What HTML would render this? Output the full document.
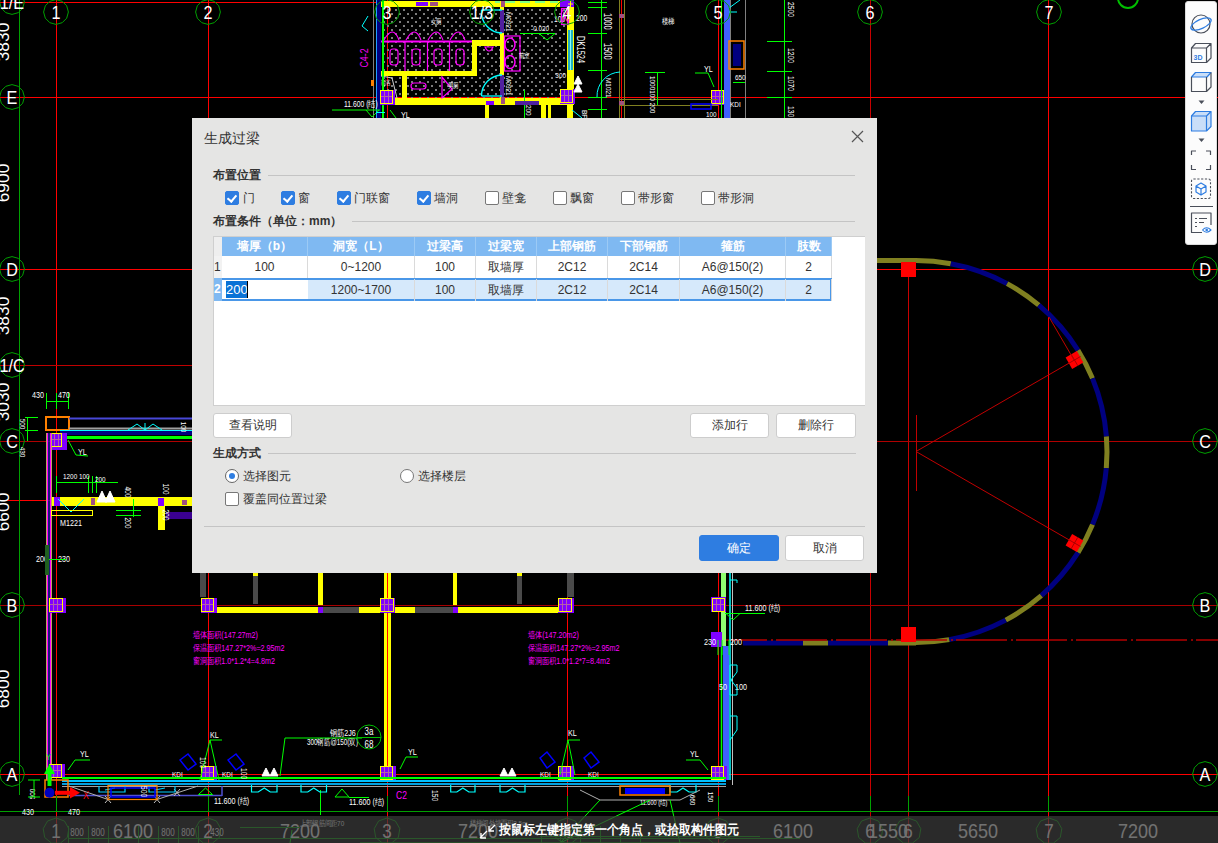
<!DOCTYPE html>
<html><head><meta charset="utf-8">
<style>
*{margin:0;padding:0;box-sizing:border-box}
html,body{width:1218px;height:843px;overflow:hidden;background:#000;font-family:"Liberation Sans",sans-serif}
#cad{position:absolute;left:0;top:0}
#dlg{position:absolute;left:192px;top:118px;width:685px;height:455px;background:#e5e5e4;color:#333;font-size:12px}
#tb{position:absolute;left:1185px;top:1px;width:32px;height:244px;background:#fcfcfc;border-radius:3px;border:1px solid #dcdcdc}
#sb{position:absolute;left:0;top:816px;width:1218px;height:27px;background:rgba(58,58,58,0.72)}

#dlg .t{position:absolute;white-space:nowrap;font-size:12px;line-height:14px;color:#333}
#dlg .b{font-weight:bold}
#dlg .hr{position:absolute;height:1px;background:#c4c4c4}
#dlg .cb{position:absolute;width:14px;height:14px;border:1px solid #777;border-radius:2px;background:#fff}
#dlg .cb.on{background:#2e7de1;border-color:#2e7de1}
#dlg .cb.on::after{content:"";position:absolute;left:3px;top:1px;width:4px;height:7px;border:solid #fff;border-width:0 2px 2px 0;transform:rotate(40deg)}
#dlg .rd{position:absolute;width:14px;height:14px;border:1px solid #777;border-radius:50%;background:#fff}
#dlg .rd.on{border-color:#666}
#dlg .rd.on::after{content:"";position:absolute;left:3px;top:3px;width:6px;height:6px;border-radius:50%;background:#2e7de1}
#tbl .hd{position:absolute;top:0;height:19px;background:#7fb9f2;color:#fff;font-weight:bold;text-align:center;line-height:19px;font-size:12px;border-right:1px solid #9ccaf5}
#tbl .cl{position:absolute;height:22px;text-align:center;line-height:22px;font-size:12px;color:#333;border-right:1px solid #dadada}
#dlg .btn{position:absolute;height:25px;background:#fff;border:1px solid #cdcdcd;border-radius:3px;text-align:center;line-height:23px;font-size:12px;color:#333}
#dlg .btn.pri{background:#2e7de1;border-color:#2e7de1;color:#fff}
</style></head><body>
<svg id="cad" width="1218" height="843" viewBox="0 0 1218 843" font-family="Liberation Sans, sans-serif"><line x1="56.5" y1="0" x2="56.5" y2="843" stroke="#ff0000" stroke-width="1" />
<line x1="208.5" y1="0" x2="208.5" y2="843" stroke="#ff0000" stroke-width="1" />
<line x1="387.5" y1="0" x2="387.5" y2="843" stroke="#ff0000" stroke-width="1" />
<line x1="567.5" y1="0" x2="567.5" y2="843" stroke="#ff0000" stroke-width="1" />
<line x1="718.5" y1="0" x2="718.5" y2="843" stroke="#ff0000" stroke-width="1" />
<line x1="870.5" y1="0" x2="870.5" y2="843" stroke="#c80000" stroke-width="1" />
<line x1="1048.5" y1="0" x2="1048.5" y2="843" stroke="#ff0000" stroke-width="1" />
<line x1="908.5" y1="262" x2="908.5" y2="843" stroke="#c80000" stroke-width="1" />
<line x1="0" y1="2.5" x2="380" y2="2.5" stroke="#ff0000" stroke-width="1" />
<line x1="0" y1="365.5" x2="870" y2="365.5" stroke="#c00000" stroke-width="1" />
<line x1="0" y1="97.5" x2="1218" y2="97.5" stroke="#ff0000" stroke-width="1" />
<line x1="0" y1="269.5" x2="1218" y2="269.5" stroke="#ff0000" stroke-width="1" />
<line x1="0" y1="441.5" x2="1218" y2="441.5" stroke="#b00000" stroke-width="1" />
<line x1="0" y1="605.5" x2="1218" y2="605.5" stroke="#a80000" stroke-width="1" />
<line x1="0" y1="774.5" x2="1218" y2="774.5" stroke="#ff0000" stroke-width="1" />
<line x1="0" y1="500.5" x2="192" y2="500.5" stroke="#ff0000" stroke-width="1" />
<line x1="19.5" y1="0" x2="19.5" y2="795" stroke="#00a000" stroke-width="1" />
<line x1="0" y1="811.5" x2="1218" y2="811.5" stroke="#00a000" stroke-width="1" />
<defs><pattern id="dots" x="3" y="1" width="8" height="8" patternUnits="userSpaceOnUse"><rect x="0" y="0" width="2" height="2" fill="#7c7c7c"/><rect x="4" y="4" width="2" height="2" fill="#7c7c7c"/></pattern></defs>
<rect x="382" y="7" width="185" height="91" fill="url(#dots)" stroke="none" stroke-width="1" />
<rect x="379" y="1" width="195" height="6" fill="#ffff00" stroke="none" stroke-width="1" />
<rect x="379" y="98" width="195" height="7" fill="#ffff00" stroke="none" stroke-width="1" />
<rect x="500" y="1" width="4" height="104" fill="#ffff00" stroke="none" stroke-width="1" />
<rect x="567" y="1" width="7" height="104" fill="#ffff00" stroke="none" stroke-width="1" />
<rect x="568" y="30" width="5" height="40" fill="#20b0c0" stroke="none" stroke-width="1" />
<line x1="570.5" y1="30" x2="570.5" y2="70" stroke="#80ffff" stroke-width="1" />
<rect x="381" y="71" width="96" height="5" fill="#ffff00" stroke="none" stroke-width="1" />
<rect x="402" y="76" width="5" height="23" fill="#ffff00" stroke="none" stroke-width="1" />
<rect x="472" y="40" width="5" height="36" fill="#ffff00" stroke="none" stroke-width="1" />
<rect x="472" y="40" width="29" height="6" fill="#ffff00" stroke="none" stroke-width="1" />
<line x1="381" y1="41.5" x2="472" y2="41.5" stroke="#ff00ff" stroke-width="2" />
<line x1="405" y1="41" x2="405" y2="71" stroke="#ff00ff" stroke-width="1.2" />
<line x1="427.5" y1="41" x2="427.5" y2="71" stroke="#ff00ff" stroke-width="1.2" />
<line x1="449.5" y1="41" x2="449.5" y2="71" stroke="#ff00ff" stroke-width="1.2" />
<rect x="390" y="49" width="8" height="16" fill="none" stroke="#ff00ff" stroke-width="1.2" rx="3"/>
<path d="M384,40 Q393,24 399,40" stroke="#ff00ff" stroke-width="1.2" fill="none" />
<rect x="412" y="49" width="8" height="16" fill="none" stroke="#ff00ff" stroke-width="1.2" rx="3"/>
<path d="M406,40 Q415,24 421,40" stroke="#ff00ff" stroke-width="1.2" fill="none" />
<rect x="434" y="49" width="8" height="16" fill="none" stroke="#ff00ff" stroke-width="1.2" rx="3"/>
<path d="M428,40 Q437,24 443,40" stroke="#ff00ff" stroke-width="1.2" fill="none" />
<rect x="456" y="49" width="8" height="16" fill="none" stroke="#ff00ff" stroke-width="1.2" rx="3"/>
<path d="M450,40 Q459,24 465,40" stroke="#ff00ff" stroke-width="1.2" fill="none" />
<rect x="411" y="83" width="15" height="6" fill="none" stroke="#ff00ff" stroke-width="1.2" rx="3"/>
<path d="M442,77 L442,98 L452,89 Z" stroke="#ff00ff" stroke-width="1.2" fill="none" />
<path d="M485,47 Q489,55 493,47 Z" stroke="#ff00ff" stroke-width="1.2" fill="none" />
<rect x="504.5" y="36" width="15.5" height="35" fill="none" stroke="#ff00ff" stroke-width="1.2" />
<ellipse cx="510" cy="44.5" rx="5" ry="6.5" fill="none" stroke="#ff00ff" stroke-width="1.5"/>
<ellipse cx="510" cy="62" rx="5" ry="6.5" fill="none" stroke="#ff00ff" stroke-width="1.5"/>
<text transform="translate(431,24) scale(0.8,1)" fill="#fff" font-size="7" text-anchor="start" >女厕</text>
<text transform="translate(448,88) scale(0.8,1)" fill="#fff" font-size="7" text-anchor="start" >男厕</text>
<text transform="translate(519,58) scale(0.8,1)" fill="#fff" font-size="7" text-anchor="start" >前室</text>
<text transform="translate(380,85) scale(0.8,1)" fill="#fff" font-size="7" text-anchor="start" >清洁</text>
<path d="M381,76 L392,78 L397,98" stroke="#d0d0d0" stroke-width="1" fill="none" />
<rect x="500" y="10" width="4" height="23" fill="#5020a0" stroke="none" stroke-width="1" />
<rect x="500" y="75" width="4" height="22" fill="#5020a0" stroke="none" stroke-width="1" />
<path d="M502,33 A21,21 0 0 1 481.5,10" stroke="#00ffff" stroke-width="1.3" fill="none" />
<line x1="481.5" y1="10" x2="502" y2="10" stroke="#00ffff" stroke-width="1.3" />
<path d="M481.5,96 A21,21 0 0 1 502,75" stroke="#00ffff" stroke-width="1.3" fill="none" />
<line x1="481.5" y1="96" x2="502" y2="96" stroke="#00ffff" stroke-width="1.3" />
<text transform="translate(506,12) rotate(90) scale(0.8,1)" fill="#fff" font-size="8" text-anchor="start" >M0921</text>
<text transform="translate(506,76) rotate(90) scale(0.8,1)" fill="#fff" font-size="8" text-anchor="start" >M0921</text>
<line x1="520" y1="33.5" x2="555" y2="33.5" stroke="#00ff00" stroke-width="1" />
<path d="M539,33.5 L547,40 L555,33.5" stroke="#00ff00" stroke-width="1" fill="none" />
<text transform="translate(531,31) scale(0.8,1)" fill="#fff" font-size="8" text-anchor="start" >-0.020</text>
<line x1="373.5" y1="0" x2="373.5" y2="118" stroke="#808080" stroke-width="1" />
<rect x="377" y="0" width="4" height="118" fill="#000080" stroke="none" stroke-width="1" />
<line x1="376.5" y1="0" x2="376.5" y2="118" stroke="#20a0ff" stroke-width="1" />
<rect x="382" y="0" width="2" height="118" fill="#00ff00" stroke="none" stroke-width="1" />
<text transform="translate(368,58) rotate(-90) scale(0.8,1)" fill="#ff00ff" font-size="11" text-anchor="middle" >C4-2</text>
<path d="M368,16 L362,26 L368,31" stroke="#00ffff" stroke-width="1" fill="none" />
<rect x="371" y="80" width="3" height="6" fill="#ff8000" stroke="none" stroke-width="1" />
<rect x="380" y="90" width="15" height="15" fill="#8000ff" stroke="none" stroke-width="1" />
<rect x="380.5" y="90.5" width="12" height="13" fill="none" stroke="#ffff00" stroke-width="1" />
<path d="M384.5,91 L384.5,103 M388.5,91 L388.5,103 M381,96.5 L392,96.5" stroke="#d8a070" stroke-width="1" opacity="0.6"/>
<rect x="560" y="89" width="15" height="15" fill="#8000ff" stroke="none" stroke-width="1" />
<rect x="560.5" y="89.5" width="12" height="13" fill="none" stroke="#ffff00" stroke-width="1" />
<path d="M564.5,90 L564.5,102 M568.5,90 L568.5,102 M561,95.5 L572,95.5" stroke="#d8a070" stroke-width="1" opacity="0.6"/>
<rect x="711" y="90" width="15" height="15" fill="#8000ff" stroke="none" stroke-width="1" />
<rect x="711.5" y="90.5" width="12" height="13" fill="none" stroke="#ffff00" stroke-width="1" />
<path d="M715.5,91 L715.5,103 M719.5,91 L719.5,103 M712,96.5 L723,96.5" stroke="#d8a070" stroke-width="1" opacity="0.6"/>
<rect x="560" y="1" width="8" height="6" fill="#8000ff" stroke="none" stroke-width="1" />
<rect x="416" y="2" width="12" height="4" fill="#8000ff" stroke="none" stroke-width="1" />
<rect x="430" y="2" width="8" height="4" fill="#a05080" stroke="none" stroke-width="1" />
<rect x="501" y="1" width="4" height="6" fill="#a05080" stroke="none" stroke-width="1" />
<rect x="501" y="97" width="4" height="7" fill="#a05080" stroke="none" stroke-width="1" />
<rect x="485" y="105" width="4" height="13" fill="#ffff00" stroke="none" stroke-width="1" />
<rect x="541" y="105" width="5" height="13" fill="#ffff00" stroke="none" stroke-width="1" />
<rect x="548" y="105" width="3" height="13" fill="#ffff00" stroke="none" stroke-width="1" />
<rect x="567" y="105" width="6" height="13" fill="#ffff00" stroke="none" stroke-width="1" />
<text transform="translate(582,110) rotate(90) scale(0.8,1)" fill="#fff" font-size="8" text-anchor="start" >BF</text>
<path d="M572,110 L582,118" stroke="#00ffff" stroke-width="1" fill="none" />
<path d="M495,2 L500,2 M505,2 L515,2 M520,2 L530,2 M535,2 L545,2 M550,2 L558,2" stroke="#00ffff" stroke-width="1" fill="none" />
<rect x="486" y="101" width="8" height="4" fill="#8000ff" stroke="none" stroke-width="1" />
<line x1="524.5" y1="90" x2="524.5" y2="118" stroke="#00ff00" stroke-width="1" />
<rect x="515" y="101" width="24" height="4" fill="#5020a0" stroke="none" stroke-width="1" />
<text transform="translate(526,105) rotate(90) scale(0.8,1)" fill="#fff" font-size="8" text-anchor="start" >200</text>
<text transform="translate(401,118) scale(0.8,1)" fill="#fff" font-size="9" text-anchor="start" >YL</text>
<path d="M390,110 L396,118" stroke="#00ff00" stroke-width="1" fill="none" />
<text transform="translate(344,107) scale(0.8,1)" fill="#fff" font-size="8.5" text-anchor="start" >11.600 (结)</text>
<path d="M332,110 L380,110 M366,110 L372,117 L379,110" stroke="#00ff00" stroke-width="1" fill="none" />
<line x1="376" y1="112.5" x2="385" y2="112.5" stroke="#00ffff" stroke-width="1" />
<line x1="601.5" y1="0" x2="601.5" y2="118" stroke="#00ff00" stroke-width="1" />
<line x1="588" y1="2.5" x2="607" y2="2.5" stroke="#00ff00" stroke-width="1" />
<line x1="588" y1="7.5" x2="607" y2="7.5" stroke="#00ff00" stroke-width="1" />
<line x1="588" y1="33.5" x2="607" y2="33.5" stroke="#00ff00" stroke-width="1" />
<line x1="588" y1="70.5" x2="607" y2="70.5" stroke="#00ff00" stroke-width="1" />
<line x1="588" y1="97.5" x2="607" y2="97.5" stroke="#00ff00" stroke-width="1" />
<line x1="588" y1="109.5" x2="607" y2="109.5" stroke="#00ff00" stroke-width="1" />
<text transform="translate(604,13) rotate(90) scale(0.75,1)" fill="#fff" font-size="10" text-anchor="start" >1000</text>
<text transform="translate(604,43) rotate(90) scale(0.75,1)" fill="#fff" font-size="10" text-anchor="start" >1500</text>
<line x1="619.5" y1="0" x2="619.5" y2="118" stroke="#808020" stroke-width="1" />
<line x1="624.5" y1="0" x2="624.5" y2="118" stroke="#808020" stroke-width="1" />
<line x1="621.5" y1="0" x2="621.5" y2="118" stroke="#ff0000" stroke-width="1" />
<rect x="619" y="14" width="5" height="4" fill="#a05080" stroke="none" stroke-width="1" />
<rect x="619" y="101" width="5" height="4" fill="#a05080" stroke="none" stroke-width="1" />
<line x1="619" y1="99.5" x2="718" y2="99.5" stroke="#808020" stroke-width="1" />
<line x1="619" y1="105.5" x2="718" y2="105.5" stroke="#808020" stroke-width="1" />
<line x1="657.5" y1="72" x2="657.5" y2="105" stroke="#00ff00" stroke-width="1" />
<line x1="645" y1="72.5" x2="665" y2="72.5" stroke="#00ff00" stroke-width="1" />
<text transform="translate(650,76) rotate(90) scale(0.8,1)" fill="#fff" font-size="8" text-anchor="start" >1000100 200</text>
<text transform="translate(576,21) scale(0.75,1)" fill="#fff" font-size="9" text-anchor="start" >200</text>
<text transform="translate(554,22) scale(0.75,1)" fill="#fff" font-size="9" text-anchor="start" >100</text>
<text transform="translate(577,36) rotate(90) scale(0.72,1)" fill="#fff" font-size="10.5" text-anchor="start" >DK1524</text>
<path d="M574,84 L578,76 L582,84 Z M574,92 L578,84 L582,92 Z" stroke="#fff" stroke-width="1" fill="#fff" />
<rect x="560" y="0" width="14" height="7" fill="#8000ff" stroke="none" stroke-width="1" />
<rect x="561.5" y="8.5" width="7" height="16" fill="none" stroke="#ff00ff" stroke-width="1.2" />
<path d="M561.5,8.5 L568.5,24.5 M568.5,8.5 L561.5,24.5" stroke="#ff00ff" stroke-width="1" fill="none" />
<path d="M568,4 L573,4 M570.5,1 L570.5,7" stroke="#ffff00" stroke-width="1" fill="none" />
<text transform="translate(566,78) scale(0.8,1)" fill="#fff" font-size="8" text-anchor="end" >300</text>
<text transform="translate(606,78) rotate(90) scale(0.8,1)" fill="#fff" font-size="8" text-anchor="start" >M1021</text>
<path d="M597,97 A24,24 0 0 1 620,72" stroke="#00ffff" stroke-width="1" fill="none" />
<text transform="translate(704,72) scale(0.8,1)" fill="#fff" font-size="9" text-anchor="start" >YL</text>
<path d="M695,73 L708,73 L714,87" stroke="#00ff00" stroke-width="1" fill="none" />
<rect x="691" y="104" width="20" height="5" fill="none" stroke="#0000ff" stroke-width="1.5" />
<text transform="translate(706,117) scale(0.8,1)" fill="#fff" font-size="8" text-anchor="start" >100</text>
<line x1="721.5" y1="0" x2="721.5" y2="118" stroke="#00ff00" stroke-width="1" />
<rect x="724" y="0" width="6" height="118" fill="#4060ff" stroke="none" stroke-width="1" />
<line x1="730.5" y1="0" x2="730.5" y2="118" stroke="#808080" stroke-width="1" />
<line x1="745.5" y1="0" x2="745.5" y2="118" stroke="#808080" stroke-width="1" />
<rect x="729" y="41" width="15" height="28" fill="none" stroke="#ff8000" stroke-width="1.5" />
<rect x="733" y="44" width="8" height="22" fill="#000080" stroke="none" stroke-width="1" />
<text transform="translate(735,80) scale(0.8,1)" fill="#fff" font-size="8" text-anchor="start" >650</text>
<text transform="translate(730,107) scale(0.8,1)" fill="#fff" font-size="8" text-anchor="start" >KDI</text>
<line x1="733" y1="82.5" x2="745" y2="82.5" stroke="#00ff00" stroke-width="1" />
<path d="M729,8 L740,0 M729,12 L737,12" stroke="#00ffff" stroke-width="1" fill="none" />
<line x1="784.5" y1="0" x2="784.5" y2="118" stroke="#00ff00" stroke-width="1" />
<line x1="767" y1="41.5" x2="792" y2="41.5" stroke="#00ff00" stroke-width="1" />
<line x1="767" y1="71.5" x2="792" y2="71.5" stroke="#00ff00" stroke-width="1" />
<line x1="767" y1="97.5" x2="792" y2="97.5" stroke="#00ff00" stroke-width="1" />
<text transform="translate(788,2) rotate(90) scale(0.75,1)" fill="#fff" font-size="9" text-anchor="start" >2500</text>
<text transform="translate(788,48) rotate(90) scale(0.75,1)" fill="#fff" font-size="9" text-anchor="start" >1200</text>
<text transform="translate(788,76) rotate(90) scale(0.75,1)" fill="#fff" font-size="9" text-anchor="start" >1070</text>
<text transform="translate(788,106) rotate(90) scale(0.75,1)" fill="#fff" font-size="9" text-anchor="start" >130</text>
<line x1="767" y1="97.5" x2="792" y2="97.5" stroke="#00ff00" stroke-width="1" />
<text transform="translate(662,24) scale(0.8,1)" fill="#fff" font-size="8" text-anchor="start" >楼梯</text>
<polygon points="56.0,-0.4 62.2,1.3 66.7,5.8 68.4,12.0 66.7,18.2 62.2,22.7 56.0,24.4 49.8,22.7 45.3,18.2 43.6,12.0 45.3,5.8 49.8,1.3" fill="none" stroke="#00a000" stroke-width="1"/>
<text transform="translate(56,18.5) scale(0.9,1)" fill="#fff" font-size="18" text-anchor="middle" >1</text>
<polygon points="208.0,-0.4 214.2,1.3 218.7,5.8 220.4,12.0 218.7,18.2 214.2,22.7 208.0,24.4 201.8,22.7 197.3,18.2 195.6,12.0 197.3,5.8 201.8,1.3" fill="none" stroke="#00a000" stroke-width="1"/>
<text transform="translate(208,18.5) scale(0.9,1)" fill="#fff" font-size="18" text-anchor="middle" >2</text>
<polygon points="387.0,-0.4 393.2,1.3 397.7,5.8 399.4,12.0 397.7,18.2 393.2,22.7 387.0,24.4 380.8,22.7 376.3,18.2 374.6,12.0 376.3,5.8 380.8,1.3" fill="none" stroke="#00a000" stroke-width="1"/>
<text transform="translate(387,18.5) scale(0.9,1)" fill="#fff" font-size="18" text-anchor="middle" >3</text>
<polygon points="482.0,-0.4 488.2,1.3 492.7,5.8 494.4,12.0 492.7,18.2 488.2,22.7 482.0,24.4 475.8,22.7 471.3,18.2 469.6,12.0 471.3,5.8 475.8,1.3" fill="none" stroke="#00a000" stroke-width="1"/>
<text transform="translate(482,18.5) scale(0.9,1)" fill="#fff" font-size="18" text-anchor="middle" >1/3</text>
<polygon points="567.0,-0.4 573.2,1.3 577.7,5.8 579.4,12.0 577.7,18.2 573.2,22.7 567.0,24.4 560.8,22.7 556.3,18.2 554.6,12.0 556.3,5.8 560.8,1.3" fill="none" stroke="#00a000" stroke-width="1"/>
<text transform="translate(567,18.5) scale(0.9,1)" fill="#fff" font-size="18" text-anchor="middle" >4</text>
<polygon points="718.0,-0.4 724.2,1.3 728.7,5.8 730.4,12.0 728.7,18.2 724.2,22.7 718.0,24.4 711.8,22.7 707.3,18.2 705.6,12.0 707.3,5.8 711.8,1.3" fill="none" stroke="#00a000" stroke-width="1"/>
<text transform="translate(718,18.5) scale(0.9,1)" fill="#fff" font-size="18" text-anchor="middle" >5</text>
<polygon points="870.0,-0.4 876.2,1.3 880.7,5.8 882.4,12.0 880.7,18.2 876.2,22.7 870.0,24.4 863.8,22.7 859.3,18.2 857.6,12.0 859.3,5.8 863.8,1.3" fill="none" stroke="#00a000" stroke-width="1"/>
<text transform="translate(870,18.5) scale(0.9,1)" fill="#fff" font-size="18" text-anchor="middle" >6</text>
<polygon points="1049.0,-0.4 1055.2,1.3 1059.7,5.8 1061.4,12.0 1059.7,18.2 1055.2,22.7 1049.0,24.4 1042.8,22.7 1038.3,18.2 1036.6,12.0 1038.3,5.8 1042.8,1.3" fill="none" stroke="#00a000" stroke-width="1"/>
<text transform="translate(1049,18.5) scale(0.9,1)" fill="#fff" font-size="18" text-anchor="middle" >7</text>
<circle cx="1128" cy="-2" r="10" fill="none" stroke="#00c000" stroke-width="2"/>
<polygon points="12.0,-10.4 18.2,-8.7 22.7,-4.2 24.4,2.0 22.7,8.2 18.2,12.7 12.0,14.4 5.8,12.7 1.3,8.2 -0.4,2.0 1.3,-4.2 5.8,-8.7" fill="none" stroke="#00a000" stroke-width="1"/>
<text transform="translate(12,8.5) scale(0.9,1)" fill="#fff" font-size="18" text-anchor="middle" >1/E</text>
<polygon points="12.0,84.6 18.2,86.3 22.7,90.8 24.4,97.0 22.7,103.2 18.2,107.7 12.0,109.4 5.8,107.7 1.3,103.2 -0.4,97.0 1.3,90.8 5.8,86.3" fill="none" stroke="#00a000" stroke-width="1"/>
<text transform="translate(12,103.5) scale(0.9,1)" fill="#fff" font-size="18" text-anchor="middle" >E</text>
<polygon points="12.0,256.6 18.2,258.3 22.7,262.8 24.4,269.0 22.7,275.2 18.2,279.7 12.0,281.4 5.8,279.7 1.3,275.2 -0.4,269.0 1.3,262.8 5.8,258.3" fill="none" stroke="#00a000" stroke-width="1"/>
<text transform="translate(12,275.5) scale(0.9,1)" fill="#fff" font-size="18" text-anchor="middle" >D</text>
<polygon points="12.0,352.6 18.2,354.3 22.7,358.8 24.4,365.0 22.7,371.2 18.2,375.7 12.0,377.4 5.8,375.7 1.3,371.2 -0.4,365.0 1.3,358.8 5.8,354.3" fill="none" stroke="#00a000" stroke-width="1"/>
<text transform="translate(12,371.5) scale(0.9,1)" fill="#fff" font-size="18" text-anchor="middle" >1/C</text>
<polygon points="12.0,428.6 18.2,430.3 22.7,434.8 24.4,441.0 22.7,447.2 18.2,451.7 12.0,453.4 5.8,451.7 1.3,447.2 -0.4,441.0 1.3,434.8 5.8,430.3" fill="none" stroke="#00a000" stroke-width="1"/>
<text transform="translate(12,447.5) scale(0.9,1)" fill="#fff" font-size="18" text-anchor="middle" >C</text>
<polygon points="12.0,592.6 18.2,594.3 22.7,598.8 24.4,605.0 22.7,611.2 18.2,615.7 12.0,617.4 5.8,615.7 1.3,611.2 -0.4,605.0 1.3,598.8 5.8,594.3" fill="none" stroke="#00a000" stroke-width="1"/>
<text transform="translate(12,611.5) scale(0.9,1)" fill="#fff" font-size="18" text-anchor="middle" >B</text>
<polygon points="12.0,761.6 18.2,763.3 22.7,767.8 24.4,774.0 22.7,780.2 18.2,784.7 12.0,786.4 5.8,784.7 1.3,780.2 -0.4,774.0 1.3,767.8 5.8,763.3" fill="none" stroke="#00a000" stroke-width="1"/>
<text transform="translate(12,780.5) scale(0.9,1)" fill="#fff" font-size="18" text-anchor="middle" >A</text>
<polygon points="1205.0,256.6 1211.2,258.3 1215.7,262.8 1217.4,269.0 1215.7,275.2 1211.2,279.7 1205.0,281.4 1198.8,279.7 1194.3,275.2 1192.6,269.0 1194.3,262.8 1198.8,258.3" fill="none" stroke="#00a000" stroke-width="1"/>
<text transform="translate(1205,275.5) scale(0.9,1)" fill="#fff" font-size="18" text-anchor="middle" >D</text>
<polygon points="1205.0,428.6 1211.2,430.3 1215.7,434.8 1217.4,441.0 1215.7,447.2 1211.2,451.7 1205.0,453.4 1198.8,451.7 1194.3,447.2 1192.6,441.0 1194.3,434.8 1198.8,430.3" fill="none" stroke="#00a000" stroke-width="1"/>
<text transform="translate(1205,447.5) scale(0.9,1)" fill="#fff" font-size="18" text-anchor="middle" >C</text>
<polygon points="1205.0,592.6 1211.2,594.3 1215.7,598.8 1217.4,605.0 1215.7,611.2 1211.2,615.7 1205.0,617.4 1198.8,615.7 1194.3,611.2 1192.6,605.0 1194.3,598.8 1198.8,594.3" fill="none" stroke="#00a000" stroke-width="1"/>
<text transform="translate(1205,611.5) scale(0.9,1)" fill="#fff" font-size="18" text-anchor="middle" >B</text>
<polygon points="1205.0,761.6 1211.2,763.3 1215.7,767.8 1217.4,774.0 1215.7,780.2 1211.2,784.7 1205.0,786.4 1198.8,784.7 1194.3,780.2 1192.6,774.0 1194.3,767.8 1198.8,763.3" fill="none" stroke="#00a000" stroke-width="1"/>
<text transform="translate(1205,780.5) scale(0.9,1)" fill="#fff" font-size="18" text-anchor="middle" >A</text>
<text transform="translate(8.5,42) rotate(-90) scale(1.02,1)" fill="#fff" font-size="17" text-anchor="middle" >3830</text>
<text transform="translate(8.5,183) rotate(-90) scale(1.02,1)" fill="#fff" font-size="17" text-anchor="middle" >6900</text>
<text transform="translate(8.5,316) rotate(-90) scale(1.02,1)" fill="#fff" font-size="17" text-anchor="middle" >3830</text>
<text transform="translate(8.5,402) rotate(-90) scale(1.02,1)" fill="#fff" font-size="17" text-anchor="middle" >3030</text>
<text transform="translate(8.5,512) rotate(-90) scale(1.02,1)" fill="#fff" font-size="17" text-anchor="middle" >6600</text>
<text transform="translate(8.5,689) rotate(-90) scale(1.02,1)" fill="#fff" font-size="17" text-anchor="middle" >6800</text>
<path d="M916.0,260.5 A191,191 0 0 1 950.8,263.7" stroke="#808020" stroke-width="5" fill="none" />
<path d="M950.8,263.7 A191,191 0 0 1 1007.1,283.6" stroke="#000080" stroke-width="5" fill="none" />
<path d="M1007.1,283.6 A191,191 0 0 1 1038.8,305.2" stroke="#808020" stroke-width="5" fill="none" />
<path d="M1038.8,305.2 A191,191 0 0 1 1078.0,350.3" stroke="#000080" stroke-width="5" fill="none" />
<path d="M1078.0,350.3 A191,191 0 0 1 1092.5,378.4" stroke="#808020" stroke-width="5" fill="none" />
<path d="M1092.5,378.4 A191,191 0 0 1 1106.4,436.5" stroke="#000080" stroke-width="5" fill="none" />
<path d="M1106.4,436.5 A191,191 0 0 1 1106.3,468.1" stroke="#808020" stroke-width="5" fill="none" />
<path d="M1106.3,468.1 A191,191 0 0 1 1092.5,524.6" stroke="#000080" stroke-width="5" fill="none" />
<path d="M1092.5,524.6 A191,191 0 0 1 1078.0,552.7" stroke="#808020" stroke-width="5" fill="none" />
<path d="M1078.0,552.7 A191,191 0 0 1 1041.3,595.6" stroke="#000080" stroke-width="5" fill="none" />
<path d="M1041.3,595.6 A191,191 0 0 1 1005.7,620.1" stroke="#808020" stroke-width="5" fill="none" />
<path d="M1005.7,620.1 A191,191 0 0 1 949.2,639.6" stroke="#000080" stroke-width="5" fill="none" />
<path d="M949.2,639.6 A191,191 0 0 1 916.0,642.5" stroke="#808020" stroke-width="5" fill="none" />
<line x1="877" y1="260.5" x2="916" y2="260.5" stroke="#808020" stroke-width="5" />
<line x1="743" y1="643" x2="803" y2="643" stroke="#000080" stroke-width="5" />
<line x1="803" y1="643" x2="828" y2="643" stroke="#808020" stroke-width="5" />
<line x1="828" y1="643" x2="888" y2="643" stroke="#000080" stroke-width="5" />
<line x1="888" y1="643" x2="916" y2="643" stroke="#808020" stroke-width="5" />
<line x1="716" y1="640" x2="1218" y2="640" stroke="#b40000" stroke-width="1.5" stroke-dasharray="51,4,2,3"/>
<rect x="901" y="262" width="15" height="15" fill="#ff0000" stroke="none" stroke-width="1" />
<rect x="901" y="627" width="15" height="15" fill="#ff0000" stroke="none" stroke-width="1" />
<line x1="916" y1="451.5" x2="1074.4826488925523" y2="360.0" stroke="#c00000" stroke-width="1" />
<g transform="rotate(-30 1074.5 360.0)"><rect x="1068.0" y="353.5" width="13" height="13" fill="#ff0000"/><path d="M1067.5,360.0 L1081.5,360.0 M1074.5,353.0 L1074.5,367.0" stroke="#a00000" stroke-width="0.8"/></g>
<line x1="916" y1="451.5" x2="1074.4826488925523" y2="543.0" stroke="#c00000" stroke-width="1" />
<g transform="rotate(30 1074.5 543.0)"><rect x="1068.0" y="536.5" width="13" height="13" fill="#ff0000"/><path d="M1067.5,543.0 L1081.5,543.0 M1074.5,536.0 L1074.5,550.0" stroke="#a00000" stroke-width="0.8"/></g>
<line x1="916.5" y1="415" x2="916.5" y2="491" stroke="#c00000" stroke-width="1" />
<line x1="1049" y1="317" x2="1074" y2="360" stroke="#c00000" stroke-width="1" />
<rect x="46" y="417" width="23" height="13" fill="none" stroke="#ff8000" stroke-width="2" />
<line x1="69" y1="418.5" x2="192" y2="418.5" stroke="#4848d8" stroke-width="2" />
<line x1="69" y1="428.5" x2="192" y2="428.5" stroke="#a0a0a0" stroke-width="2" />
<line x1="60" y1="430.5" x2="192" y2="430.5" stroke="#00ffff" stroke-width="1" />
<rect x="60" y="431" width="132" height="4" fill="#000080" stroke="none" stroke-width="1" />
<rect x="60" y="436" width="132" height="3" fill="#00ff00" stroke="none" stroke-width="1" />
<rect x="50" y="433" width="17" height="17" fill="#8000ff" stroke="none" stroke-width="1" />
<rect x="50.5" y="433.5" width="11" height="13" fill="none" stroke="#ffff00" stroke-width="1" />
<path d="M54.5,434 L54.5,446 M58.5,434 L58.5,446 M51,439.5 L61,439.5" stroke="#d8a070" stroke-width="1" opacity="0.6"/>
<line x1="46.5" y1="433" x2="46.5" y2="780" stroke="#c0a060" stroke-width="1" />
<line x1="47.5" y1="433" x2="47.5" y2="780" stroke="#ff00ff" stroke-width="1" />
<line x1="49" y1="433" x2="49" y2="780" stroke="#2020a0" stroke-width="1.5" />
<line x1="50.5" y1="433" x2="50.5" y2="780" stroke="#ff00ff" stroke-width="1" />
<line x1="51.5" y1="433" x2="51.5" y2="780" stroke="#c0a060" stroke-width="1" />
<line x1="46.5" y1="393" x2="46.5" y2="409" stroke="#00ff00" stroke-width="1" />
<line x1="56.5" y1="393" x2="56.5" y2="409" stroke="#00ff00" stroke-width="1" />
<line x1="68.5" y1="393" x2="68.5" y2="409" stroke="#00ff00" stroke-width="1" />
<line x1="46" y1="401.5" x2="68" y2="401.5" stroke="#00ff00" stroke-width="1" />
<text transform="translate(32,398) scale(0.8,1)" fill="#fff" font-size="9" text-anchor="start" >430</text>
<text transform="translate(58,398) scale(0.8,1)" fill="#fff" font-size="9" text-anchor="start" >470</text>
<line x1="25" y1="417.5" x2="38" y2="417.5" stroke="#00ff00" stroke-width="1" />
<line x1="25" y1="430.5" x2="38" y2="430.5" stroke="#00ff00" stroke-width="1" />
<line x1="27.5" y1="417" x2="27.5" y2="441" stroke="#00ff00" stroke-width="1" />
<text transform="translate(20,424) rotate(90) scale(0.8,1)" fill="#fff" font-size="8" text-anchor="middle" >500</text>
<text transform="translate(20,452) rotate(90) scale(0.8,1)" fill="#fff" font-size="8" text-anchor="middle" >430</text>
<text transform="translate(78,455) scale(0.8,1)" fill="#fff" font-size="9" text-anchor="start" >YL</text>
<path d="M68,440 L76,455 L88,456" stroke="#00ff00" stroke-width="1" fill="none" />
<path d="M128,430 L137,424 L145,430 M145,430 L153,424 L162,430 M145,423 L145,430" stroke="#00ffff" stroke-width="1" fill="none" />
<text transform="translate(181,427) rotate(90) scale(0.8,1)" fill="#fff" font-size="8" text-anchor="middle" >100</text>
<rect x="52" y="497" width="140" height="9" fill="#ffff00" stroke="none" stroke-width="1" />
<rect x="54" y="497" width="6" height="9" fill="#8000ff" stroke="none" stroke-width="1" />
<path d="M58,499 L71,512 L84,499" stroke="#00ffff" stroke-width="1" fill="none" />
<rect x="51.5" y="510.5" width="41" height="5" fill="none" stroke="#ffff00" stroke-width="1" />
<text transform="translate(60,526) scale(0.8,1)" fill="#fff" font-size="9" text-anchor="start" >M1221</text>
<line x1="56" y1="482.5" x2="118" y2="482.5" stroke="#00ff00" stroke-width="1" />
<line x1="56.5" y1="476" x2="56.5" y2="493" stroke="#00ff00" stroke-width="1" />
<line x1="88.5" y1="476" x2="88.5" y2="493" stroke="#00ff00" stroke-width="1" />
<line x1="92.5" y1="476" x2="92.5" y2="493" stroke="#00ff00" stroke-width="1" />
<line x1="96.5" y1="476" x2="96.5" y2="493" stroke="#00ff00" stroke-width="1" />
<text transform="translate(63,479) scale(0.8,1)" fill="#fff" font-size="8" text-anchor="start" >1200 100</text>
<text transform="translate(95,482) scale(0.8,1)" fill="#fff" font-size="8" text-anchor="start" >200</text>
<path d="M97,502 L102,491 L107,502 Z M105,502 L110,491 L115,502 Z" stroke="#fff" stroke-width="1" fill="#fff" />
<rect x="91" y="498" width="4" height="7" fill="#a05080" stroke="none" stroke-width="1" />
<rect x="158" y="498" width="6" height="8" fill="#8000ff" stroke="none" stroke-width="1" />
<rect x="158" y="506" width="7" height="24" fill="#ffff00" stroke="none" stroke-width="1" />
<rect x="166" y="512" width="26" height="7" fill="#3a0090" stroke="none" stroke-width="1" />
<rect x="182" y="500" width="5" height="5" fill="#a05080" stroke="none" stroke-width="1" />
<text transform="translate(163,489) rotate(90) scale(0.75,1)" fill="#fff" font-size="9" text-anchor="middle" >100</text>
<text transform="translate(163,515) rotate(90) scale(0.75,1)" fill="#fff" font-size="9" text-anchor="middle" >200</text>
<text transform="translate(125,492) rotate(90) scale(0.75,1)" fill="#fff" font-size="9" text-anchor="middle" >400</text>
<text transform="translate(125,523) rotate(90) scale(0.75,1)" fill="#fff" font-size="9" text-anchor="middle" >200</text>
<line x1="116" y1="510.5" x2="141" y2="510.5" stroke="#00ff00" stroke-width="1" />
<line x1="116" y1="515.5" x2="141" y2="515.5" stroke="#00ff00" stroke-width="1" />
<line x1="133.5" y1="499" x2="133.5" y2="517" stroke="#00ff00" stroke-width="1" />
<text transform="translate(36,562) scale(0.8,1)" fill="#fff" font-size="9" text-anchor="start" >200</text>
<text transform="translate(58,562) scale(0.8,1)" fill="#fff" font-size="9" text-anchor="start" >230</text>
<line x1="46" y1="559.5" x2="56" y2="559.5" stroke="#00ff00" stroke-width="1" />
<line x1="56" y1="559.5" x2="66" y2="559.5" stroke="#00ff00" stroke-width="1" />
<rect x="45" y="545" width="4" height="30" fill="#206020" stroke="none" stroke-width="1" />
<rect x="49" y="598" width="17" height="15" fill="#8000ff" stroke="none" stroke-width="1" />
<rect x="49.5" y="598.5" width="13" height="13" fill="none" stroke="#ffff00" stroke-width="1" />
<path d="M53.5,599 L53.5,611 M57.5,599 L57.5,611 M50,604.5 L62,604.5" stroke="#d8a070" stroke-width="1" opacity="0.6"/>
<rect x="200" y="573" width="6" height="24" fill="#4a4a4a" stroke="none" stroke-width="1" />
<rect x="201" y="598" width="16" height="15" fill="#8000ff" stroke="none" stroke-width="1" />
<rect x="201.5" y="598.5" width="12" height="13" fill="none" stroke="#ffff00" stroke-width="1" />
<path d="M205.5,599 L205.5,611 M209.5,599 L209.5,611 M202,604.5 L213,604.5" stroke="#d8a070" stroke-width="1" opacity="0.6"/>
<rect x="217" y="607" width="101" height="6" fill="#ffff00" stroke="none" stroke-width="1" />
<rect x="253" y="573" width="5" height="31" fill="#4a4a4a" stroke="none" stroke-width="1" />
<rect x="253" y="573" width="5" height="3" fill="#ffff00" stroke="none" stroke-width="1" />
<rect x="318" y="573" width="5" height="32" fill="#ffff00" stroke="none" stroke-width="1" />
<rect x="318" y="607" width="5" height="6" fill="#8000ff" stroke="none" stroke-width="1" />
<rect x="323" y="607" width="36" height="6" fill="#4a4a4a" stroke="none" stroke-width="1" />
<rect x="359" y="607" width="22" height="6" fill="#ffff00" stroke="none" stroke-width="1" />
<rect x="384" y="573" width="7" height="200" fill="#ffff00" stroke="none" stroke-width="1" />
<line x1="387.5" y1="573" x2="387.5" y2="775" stroke="#ff0000" stroke-width="1" />
<rect x="380" y="598" width="15" height="15" fill="#8000ff" stroke="none" stroke-width="1" />
<rect x="380.5" y="598.5" width="13" height="13" fill="none" stroke="#ffff00" stroke-width="1" />
<path d="M384.5,599 L384.5,611 M388.5,599 L388.5,611 M381,604.5 L393,604.5" stroke="#d8a070" stroke-width="1" opacity="0.6"/>
<rect x="395" y="607" width="20" height="6" fill="#ffff00" stroke="none" stroke-width="1" />
<rect x="415" y="607" width="38" height="6" fill="#4a4a4a" stroke="none" stroke-width="1" />
<rect x="453" y="573" width="4" height="32" fill="#ffff00" stroke="none" stroke-width="1" />
<rect x="453" y="607" width="5" height="6" fill="#8000ff" stroke="none" stroke-width="1" />
<rect x="458" y="607" width="100" height="6" fill="#ffff00" stroke="none" stroke-width="1" />
<rect x="517" y="573" width="5" height="31" fill="#4a4a4a" stroke="none" stroke-width="1" />
<rect x="517" y="573" width="5" height="3" fill="#ffff00" stroke="none" stroke-width="1" />
<rect x="567" y="573" width="7" height="24" fill="#4a4a4a" stroke="none" stroke-width="1" />
<rect x="558" y="598" width="16" height="15" fill="#8000ff" stroke="none" stroke-width="1" />
<rect x="558.5" y="598.5" width="13" height="13" fill="none" stroke="#ffff00" stroke-width="1" />
<path d="M562.5,599 L562.5,611 M566.5,599 L566.5,611 M559,604.5 L571,604.5" stroke="#d8a070" stroke-width="1" opacity="0.6"/>
<rect x="721" y="573" width="5" height="73" fill="#90ff70" stroke="none" stroke-width="1" />
<line x1="721.5" y1="646" x2="721.5" y2="780" stroke="#00ff00" stroke-width="1.5" />
<rect x="723" y="646" width="6" height="134" fill="#4060ff" stroke="none" stroke-width="1" />
<line x1="730" y1="573" x2="730" y2="780" stroke="#00ffff" stroke-width="1.5" />
<line x1="732.5" y1="573" x2="732.5" y2="785" stroke="#c0c0c0" stroke-width="1" />
<rect x="711" y="597" width="15" height="15" fill="#8000ff" stroke="none" stroke-width="1" />
<rect x="712.5" y="598.5" width="12" height="13" fill="none" stroke="#ffff00" stroke-width="1" />
<path d="M716.5,599 L716.5,611 M720.5,599 L720.5,611 M713,604.5 L724,604.5" stroke="#d8a070" stroke-width="1" opacity="0.6"/>
<rect x="711" y="632" width="11" height="15" fill="#8000ff" stroke="none" stroke-width="1" />
<text transform="translate(745,611) scale(0.8,1)" fill="#fff" font-size="9" text-anchor="start" >11.600 (结)</text>
<path d="M725,613.5 L765,613.5 M726,613.5 L733,620 L740,613.5" stroke="#00ff00" stroke-width="1" fill="none" />
<text transform="translate(704,645) scale(0.8,1)" fill="#fff" font-size="9" text-anchor="start" >230</text>
<text transform="translate(730,645) scale(0.8,1)" fill="#fff" font-size="9" text-anchor="start" >200</text>
<text transform="translate(719,690) scale(0.8,1)" fill="#fff" font-size="9" text-anchor="start" >50</text>
<text transform="translate(735,690) scale(0.8,1)" fill="#fff" font-size="9" text-anchor="start" >100</text>
<path d="M718,640 L718,655 M722,640 L722,655 M729,640 L729,655" stroke="#00ff00" stroke-width="1" fill="none" />
<path d="M730,665 L737,665 L737,672 L731,680 L737,688 L737,695 L730,695 M730,665 L730,695" stroke="#00ffff" stroke-width="1" fill="none" />
<path d="M730,716 L737,716 L737,730 L730,740" stroke="#00ffff" stroke-width="1" fill="none" />
<path d="M730,580 L737,580 L737,583" stroke="#00ffff" stroke-width="1" fill="none" />
<text transform="translate(193,638) scale(0.8,1)" fill="#ff00ff" font-size="9" text-anchor="start" >墙体面积(147.27m2)</text>
<text transform="translate(193,651) scale(0.8,1)" fill="#ff00ff" font-size="9" text-anchor="start" >保温面积147.27*2%=2.95m2</text>
<text transform="translate(193,664) scale(0.8,1)" fill="#ff00ff" font-size="9" text-anchor="start" >窗洞面积1.0*1.2*4=4.8m2</text>
<text transform="translate(528,638) scale(0.8,1)" fill="#ff00ff" font-size="9" text-anchor="start" >墙体(147.20m2)</text>
<text transform="translate(528,651) scale(0.8,1)" fill="#ff00ff" font-size="9" text-anchor="start" >保温面积147.27*2%=2.95m2</text>
<text transform="translate(528,664) scale(0.8,1)" fill="#ff00ff" font-size="9" text-anchor="start" >窗洞面积1.0*1.2*7=8.4m2</text>
<rect x="49" y="764" width="16" height="14" fill="#8000ff" stroke="none" stroke-width="1" />
<rect x="49.5" y="764.5" width="12" height="13" fill="none" stroke="#ffff00" stroke-width="1" />
<path d="M53.5,765 L53.5,777 M57.5,765 L57.5,777 M50,770.5 L61,770.5" stroke="#d8a070" stroke-width="1" opacity="0.6"/>
<rect x="201" y="766" width="16" height="14" fill="#8000ff" stroke="none" stroke-width="1" />
<rect x="201.5" y="766.5" width="12" height="13" fill="none" stroke="#ffff00" stroke-width="1" />
<path d="M205.5,767 L205.5,779 M209.5,767 L209.5,779 M202,772.5 L213,772.5" stroke="#d8a070" stroke-width="1" opacity="0.6"/>
<rect x="380" y="766" width="16" height="14" fill="#8000ff" stroke="none" stroke-width="1" />
<rect x="380.5" y="766.5" width="12" height="13" fill="none" stroke="#ffff00" stroke-width="1" />
<path d="M384.5,767 L384.5,779 M388.5,767 L388.5,779 M381,772.5 L392,772.5" stroke="#d8a070" stroke-width="1" opacity="0.6"/>
<rect x="558" y="766" width="16" height="14" fill="#8000ff" stroke="none" stroke-width="1" />
<rect x="558.5" y="766.5" width="12" height="13" fill="none" stroke="#ffff00" stroke-width="1" />
<path d="M562.5,767 L562.5,779 M566.5,767 L566.5,779 M559,772.5 L570,772.5" stroke="#d8a070" stroke-width="1" opacity="0.6"/>
<rect x="711" y="766" width="16" height="14" fill="#8000ff" stroke="none" stroke-width="1" />
<rect x="711.5" y="766.5" width="12" height="13" fill="none" stroke="#ffff00" stroke-width="1" />
<path d="M715.5,767 L715.5,779 M719.5,767 L719.5,779 M712,772.5 L723,772.5" stroke="#d8a070" stroke-width="1" opacity="0.6"/>
<rect x="62" y="777" width="664" height="2" fill="#00ff00" stroke="none" stroke-width="1" />
<rect x="62" y="780" width="664" height="2" fill="#00c0ff" stroke="none" stroke-width="1" />
<rect x="62" y="783" width="664" height="2" fill="#00a0e0" stroke="none" stroke-width="1" />
<line x1="62" y1="786.5" x2="726" y2="786.5" stroke="#a0a0a0" stroke-width="1" />
<line x1="69" y1="795.5" x2="222" y2="795.5" stroke="#5050d0" stroke-width="1.5" />
<line x1="222" y1="786" x2="222" y2="796" stroke="#5050d0" stroke-width="1.5" />
<rect x="45" y="780" width="23" height="17" fill="none" stroke="#ff8000" stroke-width="1.5" />
<circle cx="49.5" cy="792.8" r="5" fill="#0000c0"/>
<path d="M55,792.8 L70,792.8" stroke="#ff0000" stroke-width="4" fill="none" />
<path d="M70,787 L80,792.8 L70,798.5 Z" stroke="#ff0000" stroke-width="0" fill="#ff0000" />
<path d="M49.5,786 L49.5,772" stroke="#00ff00" stroke-width="4" fill="none" />
<path d="M44,774 L49.5,764 L55,774 Z" stroke="#00ff00" stroke-width="0" fill="#00ff00" />
<text transform="translate(46,760) scale(0.8,1)" fill="#00ff00" font-size="9" text-anchor="start" >Y</text>
<text transform="translate(83,799) scale(0.8,1)" fill="#ff0000" font-size="11" text-anchor="start" >X</text>
<path d="M69,786 L108,799.5 L157,799.5 L198,786" stroke="#b0b0b0" stroke-width="1" fill="none" />
<path d="M105,796 L111,803 M111,796 L105,803 M154,796 L160,803 M160,796 L154,803 M174,789 L180,796 M180,789 L174,796" stroke="#c0c0c0" stroke-width="1" fill="none" />
<path d="M99,786 L99,792 L125,792 L125,786 M149,786 L149,792 L175,792 L175,786 M105,790 L115,788 M155,790 L165,788" stroke="#00d0ff" stroke-width="1.2" fill="none" />
<rect x="111" y="788" width="44" height="9" fill="none" stroke="#0000ff" stroke-width="1.5" />
<rect x="108" y="785.5" width="49" height="14" fill="none" stroke="#ff8000" stroke-width="1.2" />
<text transform="translate(141,786) rotate(90) scale(0.75,1)" fill="#fff" font-size="9" text-anchor="start" >500</text>
<text transform="translate(80,757) scale(0.8,1)" fill="#fff" font-size="9" text-anchor="start" >YL</text>
<path d="M68,770 L75,760 L90,760" stroke="#00ff00" stroke-width="1" fill="none" />
<text transform="translate(210,738) scale(0.8,1)" fill="#fff" font-size="9" text-anchor="start" >KL</text>
<path d="M200,780 L210,740 L219,780 M210,740 L222,740" stroke="#00ff00" stroke-width="1" fill="none" />
<path d="M228,760 L236,754 L244,764 L236,770 Z" stroke="#0000ff" stroke-width="1.5" fill="none" />
<path d="M180,760 L188,754 L196,764 L188,770 Z" stroke="#0000ff" stroke-width="1.5" fill="none" />
<text transform="translate(172,777) scale(0.8,1)" fill="#fff" font-size="8" text-anchor="start" >KDI</text>
<text transform="translate(222,777) scale(0.8,1)" fill="#fff" font-size="8" text-anchor="start" >KDI</text>
<text transform="translate(241,768) rotate(90) scale(0.75,1)" fill="#fff" font-size="9" text-anchor="start" >100</text>
<text transform="translate(200,757) rotate(90) scale(0.75,1)" fill="#fff" font-size="9" text-anchor="start" >100</text>
<path d="M262,776 L266,768 L270,776 Z M270,776 L274,768 L278,776 Z" stroke="#fff" stroke-width="1" fill="#fff" />
<text transform="translate(330,736) scale(0.8,1)" fill="#fff" font-size="9" text-anchor="start" >钢筋2J6</text>
<text transform="translate(307,745) scale(0.7,1)" fill="#fff" font-size="9" text-anchor="start" >300钢筋@150(双)</text>
<path d="M280,776 L285,738 L362,738" stroke="#00ff00" stroke-width="1" fill="none" />
<circle cx="369" cy="737" r="12" fill="none" stroke="#00c000" stroke-width="1"/>
<line x1="357" y1="737.5" x2="381" y2="737.5" stroke="#00c000" stroke-width="1" />
<text transform="translate(369,735) scale(0.8,1)" fill="#fff" font-size="10" text-anchor="middle" >3a</text>
<text transform="translate(369,748) scale(0.8,1)" fill="#fff" font-size="10" text-anchor="middle" >68</text>
<path d="M198.5,794.5 L205.5,788 L212.5,794.5 Z" stroke="#00ff00" stroke-width="1" fill="none" />
<text transform="translate(214,804) scale(0.8,1)" fill="#fff" font-size="9" text-anchor="start" >11.600 (结)</text>
<text transform="translate(349,805) scale(0.8,1)" fill="#fff" font-size="9" text-anchor="start" >11.600 (结)</text>
<line x1="349" y1="797.5" x2="369" y2="797.5" stroke="#00ff00" stroke-width="1" />
<line x1="320.5" y1="790" x2="320.5" y2="815" stroke="#00ff00" stroke-width="1" />
<path d="M335,797 L342,789 L349,797 Z" stroke="#00ff00" stroke-width="1" fill="none" />
<text transform="translate(396,799) scale(0.85,1)" fill="#ff00ff" font-size="10" text-anchor="start" >C2</text>
<text transform="translate(408,755) scale(0.8,1)" fill="#fff" font-size="9" text-anchor="start" >YL</text>
<path d="M400,769 L406,757 L418,757" stroke="#00ff00" stroke-width="1" fill="none" />
<text transform="translate(568,736) scale(0.8,1)" fill="#fff" font-size="9" text-anchor="start" >KL</text>
<path d="M560,775 L568,740 L575,775 M568,740 L580,740" stroke="#00ff00" stroke-width="1" fill="none" />
<path d="M540,758 L547,752 L555,762 L547,768 Z" stroke="#0000ff" stroke-width="1.5" fill="none" />
<path d="M584,758 L591,752 L599,762 L591,768 Z" stroke="#0000ff" stroke-width="1.5" fill="none" />
<text transform="translate(540,777) scale(0.8,1)" fill="#fff" font-size="8" text-anchor="start" >KDI</text>
<text transform="translate(588,777) scale(0.8,1)" fill="#fff" font-size="8" text-anchor="start" >KDI</text>
<path d="M500,776 L504,768 L508,776 Z M508,776 L512,768 L516,776 Z" stroke="#fff" stroke-width="1" fill="#fff" />
<text transform="translate(690,757) scale(0.8,1)" fill="#fff" font-size="9" text-anchor="start" >YL</text>
<path d="M686,760 L700,760 L708,770" stroke="#00ff00" stroke-width="1" fill="none" />
<path d="M251.5,785 L251.5,792 L258.25,792 L264.25,788 L270.25,792 L277,792 L277,785 M301,785 L301,792 L307.75,792 L313.75,788 L319.75,792 L326.5,792 L326.5,785 M450.7,785 L450.7,792 L456.85,792 L462.85,788 L468.85,792 L475,792 L475,785 M500,785 L500,792 L506.5,792 L512.5,788 L518.5,792 L525,792 L525,785 M670,785 L670,792 L677.0,792 L683.0,788 L689.0,792 L696,792 L696,785 " stroke="#00ffff" stroke-width="1.2" fill="none" />
<rect x="620" y="786" width="50" height="9" fill="none" stroke="#ff8000" stroke-width="1.5" />
<rect x="625" y="788" width="40" height="6" fill="#0000ff" stroke="none" stroke-width="1" />
<path d="M580,790 L600,800 L640,800 L680,800 L700,790" stroke="#b0b0b0" stroke-width="1" fill="none" />
<text transform="translate(640,805) scale(0.8,1)" fill="#fff" font-size="7" text-anchor="start" >11.600 (结)</text>
<text transform="translate(690,800) rotate(90) scale(0.8,1)" fill="#fff" font-size="8" text-anchor="middle" >660</text>
<text transform="translate(708,797) rotate(90) scale(0.8,1)" fill="#fff" font-size="8" text-anchor="middle" >150</text>
<text transform="translate(432,790) rotate(90) scale(0.75,1)" fill="#fff" font-size="9" text-anchor="start" >150</text>
<path d="M560,843 L600,800 M560,843 L650,800 M670,800 L680,843" stroke="#00ff00" stroke-width="1" fill="none" />
<path d="M290,843 L292,830 M360,843 L700,843" stroke="#00ff00" stroke-width="1" fill="none" />
<text transform="translate(22,815) scale(0.8,1)" fill="#fff" font-size="9" text-anchor="start" >430</text>
<text transform="translate(68,815) scale(0.8,1)" fill="#fff" font-size="9" text-anchor="start" >470</text>
<text transform="translate(35,794) rotate(-90) scale(0.8,1)" fill="#fff" font-size="8" text-anchor="middle" >500</text>
<path d="M28,780 L40,780 M28,797 L40,797 M34,780 L34,797" stroke="#00ff00" stroke-width="1" fill="none" />
<line x1="56.5" y1="796" x2="56.5" y2="811" stroke="#00a000" stroke-width="1" />
<line x1="208.5" y1="796" x2="208.5" y2="811" stroke="#00a000" stroke-width="1" />
<line x1="387.5" y1="796" x2="387.5" y2="811" stroke="#00a000" stroke-width="1" />
<line x1="567.5" y1="796" x2="567.5" y2="811" stroke="#00a000" stroke-width="1" />
<line x1="718.5" y1="796" x2="718.5" y2="811" stroke="#00a000" stroke-width="1" />
<line x1="870.5" y1="796" x2="870.5" y2="811" stroke="#00a000" stroke-width="1" />
<line x1="908.5" y1="796" x2="908.5" y2="811" stroke="#00a000" stroke-width="1" />
<line x1="1048.5" y1="796" x2="1048.5" y2="811" stroke="#00a000" stroke-width="1" />
<polygon points="56.0,818.0 64.4,821.0 68.8,828.7 67.3,837.5 60.4,843.2 51.6,843.2 44.7,837.5 43.2,828.7 47.6,821.0" fill="none" stroke="#00a000" stroke-width="1"/>
<text transform="translate(56,838) scale(0.85,1)" fill="#ffffff" font-size="20" text-anchor="middle" >1</text>
<polygon points="208.0,818.0 216.4,821.0 220.8,828.7 219.3,837.5 212.4,843.2 203.6,843.2 196.7,837.5 195.2,828.7 199.6,821.0" fill="none" stroke="#00a000" stroke-width="1"/>
<text transform="translate(208,838) scale(0.85,1)" fill="#ffffff" font-size="20" text-anchor="middle" >2</text>
<polygon points="387.0,818.0 395.4,821.0 399.8,828.7 398.3,837.5 391.4,843.2 382.6,843.2 375.7,837.5 374.2,828.7 378.6,821.0" fill="none" stroke="#00a000" stroke-width="1"/>
<text transform="translate(387,838) scale(0.85,1)" fill="#ffffff" font-size="20" text-anchor="middle" >3</text>
<polygon points="567.0,818.0 575.4,821.0 579.8,828.7 578.3,837.5 571.4,843.2 562.6,843.2 555.7,837.5 554.2,828.7 558.6,821.0" fill="none" stroke="#00a000" stroke-width="1"/>
<text transform="translate(567,838) scale(0.85,1)" fill="#ffffff" font-size="20" text-anchor="middle" >4</text>
<polygon points="718.0,818.0 726.4,821.0 730.8,828.7 729.3,837.5 722.4,843.2 713.6,843.2 706.7,837.5 705.2,828.7 709.6,821.0" fill="none" stroke="#00a000" stroke-width="1"/>
<text transform="translate(718,838) scale(0.85,1)" fill="#ffffff" font-size="20" text-anchor="middle" >5</text>
<polygon points="870.0,818.0 878.4,821.0 882.8,828.7 881.3,837.5 874.4,843.2 865.6,843.2 858.7,837.5 857.2,828.7 861.6,821.0" fill="none" stroke="#00a000" stroke-width="1"/>
<text transform="translate(870,838) scale(0.85,1)" fill="#ffffff" font-size="20" text-anchor="middle" >6</text>
<polygon points="908.0,818.0 916.4,821.0 920.8,828.7 919.3,837.5 912.4,843.2 903.6,843.2 896.7,837.5 895.2,828.7 899.6,821.0" fill="none" stroke="#00a000" stroke-width="1"/>
<text transform="translate(908,838) scale(0.85,1)" fill="#ffffff" font-size="20" text-anchor="middle" >6</text>
<polygon points="1049.0,818.0 1057.4,821.0 1061.8,828.7 1060.3,837.5 1053.4,843.2 1044.6,843.2 1037.7,837.5 1036.2,828.7 1040.6,821.0" fill="none" stroke="#00a000" stroke-width="1"/>
<text transform="translate(1049,838) scale(0.85,1)" fill="#ffffff" font-size="20" text-anchor="middle" >7</text>
<text transform="translate(133,838) scale(0.9,1)" fill="#ffffff" font-size="20" text-anchor="middle" >6100</text>
<text transform="translate(300,838) scale(0.9,1)" fill="#ffffff" font-size="20" text-anchor="middle" >7200</text>
<text transform="translate(478,838) scale(0.9,1)" fill="#ffffff" font-size="20" text-anchor="middle" >7200</text>
<text transform="translate(793,838) scale(0.9,1)" fill="#ffffff" font-size="20" text-anchor="middle" >6100</text>
<text transform="translate(888,838) scale(0.9,1)" fill="#ffffff" font-size="20" text-anchor="middle" >1550</text>
<text transform="translate(978,838) scale(0.9,1)" fill="#ffffff" font-size="20" text-anchor="middle" >5650</text>
<text transform="translate(1138,838) scale(0.9,1)" fill="#ffffff" font-size="20" text-anchor="middle" >7200</text>
<text transform="translate(77,836) scale(0.8,1)" fill="#ffffff" font-size="10" text-anchor="middle" >800</text>
<text transform="translate(98,836) scale(0.8,1)" fill="#ffffff" font-size="10" text-anchor="middle" >800</text>
<text transform="translate(168,836) scale(0.8,1)" fill="#ffffff" font-size="10" text-anchor="middle" >800</text>
<text transform="translate(188,836) scale(0.8,1)" fill="#ffffff" font-size="10" text-anchor="middle" >800</text>
<text transform="translate(217,836) scale(0.8,1)" fill="#ffffff" font-size="10" text-anchor="middle" >430</text>
<line x1="68" y1="838.5" x2="800" y2="838.5" stroke="#00a000" stroke-width="1" />
<line x1="68.5" y1="826" x2="68.5" y2="843" stroke="#00a000" stroke-width="1" />
<line x1="88.5" y1="826" x2="88.5" y2="843" stroke="#00a000" stroke-width="1" />
<line x1="108.5" y1="826" x2="108.5" y2="843" stroke="#00a000" stroke-width="1" />
<line x1="138.5" y1="826" x2="138.5" y2="843" stroke="#00a000" stroke-width="1" />
<line x1="158.5" y1="826" x2="158.5" y2="843" stroke="#00a000" stroke-width="1" />
<line x1="178.5" y1="826" x2="178.5" y2="843" stroke="#00a000" stroke-width="1" />
<line x1="198.5" y1="826" x2="198.5" y2="843" stroke="#00a000" stroke-width="1" />
<line x1="240" y1="827.5" x2="300" y2="827.5" stroke="#00a000" stroke-width="1" />
<line x1="540" y1="836.5" x2="760" y2="836.5" stroke="#00a000" stroke-width="1" />
<line x1="541.5" y1="826" x2="541.5" y2="843" stroke="#00a000" stroke-width="1" />
<line x1="560.5" y1="826" x2="560.5" y2="843" stroke="#00a000" stroke-width="1" />
<line x1="580.5" y1="826" x2="580.5" y2="843" stroke="#00a000" stroke-width="1" />
<line x1="600.5" y1="826" x2="600.5" y2="843" stroke="#00a000" stroke-width="1" />
<line x1="620.5" y1="826" x2="620.5" y2="843" stroke="#00a000" stroke-width="1" />
<line x1="640.5" y1="826" x2="640.5" y2="843" stroke="#00a000" stroke-width="1" />
<text transform="translate(470,826) scale(0.8,1)" fill="#ffffff" font-size="8" text-anchor="start" >楼梯间外墙面积2.5m</text>
<text transform="translate(300,826) scale(0.8,1)" fill="#ffffff" font-size="8" text-anchor="start" >上部钢筋间距70</text></svg>
<div id="dlg">
<div class="t" style="left:12px;top:13px;font-size:14px;color:#333">生成过梁</div>
<svg style="position:absolute;left:659px;top:12px" width="13" height="13"><path d="M1 1L12 12M12 1L1 12" stroke="#555" stroke-width="1.2"/></svg>
<div class="t b" style="left:21px;top:50px">布置位置</div>
<div class="hr" style="left:76px;top:57px;width:587px"></div>
<div class="cb on" style="left:33px;top:73px"></div><div class="t" style="left:51px;top:73px">门</div>
<div class="cb on" style="left:89px;top:73px"></div><div class="t" style="left:106px;top:73px">窗</div>
<div class="cb on" style="left:145px;top:73px"></div><div class="t" style="left:162px;top:73px">门联窗</div>
<div class="cb on" style="left:225px;top:73px"></div><div class="t" style="left:242px;top:73px">墙洞</div>
<div class="cb" style="left:293px;top:73px"></div><div class="t" style="left:310px;top:73px">壁龛</div>
<div class="cb" style="left:361px;top:73px"></div><div class="t" style="left:378px;top:73px">飘窗</div>
<div class="cb" style="left:429px;top:73px"></div><div class="t" style="left:446px;top:73px">带形窗</div>
<div class="cb" style="left:509px;top:73px"></div><div class="t" style="left:526px;top:73px">带形洞</div>
<div class="t b" style="left:21px;top:96px">布置条件（单位：mm）</div>
<div class="hr" style="left:160px;top:103px;width:503px"></div>
<div id="tbl" style="position:absolute;left:21px;top:118px;width:652px;height:170px;background:#fff;border:1px solid #cfcfcf;border-right:none">
 <div style="position:absolute;left:0;top:0;width:8px;height:168px;background:#fff"></div>
 <div style="position:absolute;left:0;top:0;width:8px;height:19px;background:#eee"></div>
 <div style="position:absolute;left:0;top:19px;width:8px;height:22px;background:#f2f2f2;font-size:12px;color:#333;line-height:22px">1</div>
 <div class="hd" style="left:8px;width:86px">墙厚（b）</div>
 <div class="hd" style="left:94px;width:107px">洞宽（L）</div>
 <div class="hd" style="left:201px;width:61px">过梁高</div>
 <div class="hd" style="left:262px;width:61px">过梁宽</div>
 <div class="hd" style="left:323px;width:71px">上部钢筋</div>
 <div class="hd" style="left:394px;width:72px">下部钢筋</div>
 <div class="hd" style="left:466px;width:106px">箍筋</div>
 <div class="hd" style="left:572px;width:46px">肢数</div>
 <div class="cl" style="left:8px;width:86px;top:19px">100</div>
 <div class="cl" style="left:94px;width:107px;top:19px">0~1200</div>
 <div class="cl" style="left:201px;width:61px;top:19px">100</div>
 <div class="cl" style="left:262px;width:61px;top:19px">取墙厚</div>
 <div class="cl" style="left:323px;width:71px;top:19px">2C12</div>
 <div class="cl" style="left:394px;width:72px;top:19px">2C14</div>
 <div class="cl" style="left:466px;width:106px;top:19px">A6@150(2)</div>
 <div class="cl" style="left:572px;width:46px;top:19px">2</div>
 <div style="position:absolute;left:0;top:41px;width:618px;height:23px;background:#d6e9fb;border:2px solid #4a97e8;border-left:none"></div>
 <div style="position:absolute;left:0;top:41px;width:8px;height:23px;background:#7fb9f2;color:#fff;font-weight:bold;font-size:12px;line-height:23px">2</div>
 <div style="position:absolute;left:8px;top:43px;width:86px;height:19px;background:#fff"></div>
 <div style="position:absolute;left:12px;top:44px;width:22px;height:17px;background:#0a72d6;color:#fff;font-size:13px;line-height:17px">200</div>
 <div style="position:absolute;left:33px;top:44px;width:1px;height:17px;background:#000"></div>
 <div class="cl" style="left:94px;width:107px;top:42px">1200~1700</div>
 <div class="cl" style="left:201px;width:61px;top:42px">100</div>
 <div class="cl" style="left:262px;width:61px;top:42px">取墙厚</div>
 <div class="cl" style="left:323px;width:71px;top:42px">2C12</div>
 <div class="cl" style="left:394px;width:72px;top:42px">2C14</div>
 <div class="cl" style="left:466px;width:106px;top:42px">A6@150(2)</div>
 <div class="cl" style="left:572px;width:46px;top:42px">2</div>
</div>
<div class="btn" style="left:21px;top:295px;width:79px">查看说明</div>
<div class="btn" style="left:498px;top:295px;width:79px">添加行</div>
<div class="btn" style="left:584px;top:295px;width:80px">删除行</div>
<div class="t b" style="left:21px;top:328px">生成方式</div>
<div class="hr" style="left:76px;top:335px;width:588px"></div>
<div class="rd on" style="left:33px;top:351px"></div><div class="t" style="left:51px;top:351px">选择图元</div>
<div class="rd" style="left:208px;top:351px"></div><div class="t" style="left:226px;top:351px">选择楼层</div>
<div class="cb" style="left:33px;top:374px"></div><div class="t" style="left:51px;top:374px">覆盖同位置过梁</div>
<div class="hr" style="left:12px;top:408px;width:661px"></div>
<div class="btn pri" style="left:507px;top:417px;width:80px;height:26px;line-height:24px">确定</div>
<div class="btn" style="left:593px;top:417px;width:79px;height:26px;line-height:24px">取消</div>
</div>
<div id="tb"><svg width="33" height="245" viewBox="1185 0 33 245" style="position:absolute;left:-1px;top:-1px" fill="none" stroke-linejoin="round">
<circle cx="1201" cy="23" r="9" stroke="#4a4f5a" stroke-width="1.2"/>
<ellipse cx="1201" cy="23" rx="11" ry="4.5" transform="rotate(-25 1201 23)" stroke="#2e7de1" stroke-width="1.3"/>
<path d="M1191.5,47 L1195.5,42.5 L1211,42.5 L1211,57 L1206.5,61.5 L1191.5,61.5 Z M1191.5,47 L1206.5,47 L1211,42.5 M1206.5,47 L1206.5,61.5" stroke="#4a4f5a" stroke-width="1.2"/>
<text x="1193.5" y="59" font-size="7" font-weight="bold" fill="#2e7de1" stroke="none" font-family="Liberation Sans, sans-serif">3D</text>
<path d="M1191.5,76 L1195.5,71.5 L1211,71.5 L1207,76 Z" fill="#c9def8" stroke="#2e7de1" stroke-width="1.2"/>
<path d="M1191.5,76 L1191.5,90.5 L1206.5,90.5 L1211,86 L1211,71.5 M1206.5,76 L1206.5,90.5" stroke="#4a4f5a" stroke-width="1.2"/>
<path d="M1198.5,99.5 L1204.5,99.5 L1201.5,103 Z" fill="#4a4f5a" stroke="none"/>
<path d="M1191.5,115 L1195.5,110.5 L1211,110.5 L1211,125.5 L1206.5,130 L1191.5,130 Z" fill="#c9def8" stroke="#2e7de1" stroke-width="1.2"/>
<path d="M1191.5,115 L1206.5,115 L1211,110.5 M1206.5,115 L1206.5,130" stroke="#2e7de1" stroke-width="1.2"/>
<path d="M1198.5,137.5 L1204.5,137.5 L1201.5,141 Z" fill="#4a4f5a" stroke="none"/>
<path d="M1191.5,154 L1191.5,150 L1196,150 M1206,150 L1210.5,150 L1210.5,154 M1210.5,164 L1210.5,168.5 L1206,168.5 M1196,168.5 L1191.5,168.5 L1191.5,164" stroke="#4a4f5a" stroke-width="1.2"/>
<rect x="1191.5" y="178" width="19" height="19.5" rx="2" stroke="#4a4f5a" stroke-width="1.1" stroke-dasharray="2.2,1.6"/>
<path d="M1201,182 L1206,185 L1206,191 L1201,194 L1196,191 L1196,185 Z M1196,185 L1201,188 L1206,185 M1201,188 L1201,194" stroke="#2e7de1" stroke-width="1.2"/>
<line x1="1190" y1="205.5" x2="1213" y2="205.5" stroke="#4a4f5a" stroke-width="1"/>
<path d="M1202,231.5 L1191.5,231.5 L1191.5,212 L1211,212 L1211,224" stroke="#4a4f5a" stroke-width="1.2"/>
<path d="M1195,217.5 L1197,217.5 M1199,217.5 L1207,217.5 M1195,221.5 L1197,221.5 M1199,221.5 L1204,221.5 M1195,225.5 L1197,225.5" stroke="#4a4f5a" stroke-width="1.1"/>
<path d="M1202.5,229 Q1206.5,224.5 1211,229 Q1206.5,233.5 1202.5,229 Z" stroke="#2e7de1" stroke-width="1.1" fill="#fff"/>
<circle cx="1206.7" cy="229" r="1.3" fill="#2e7de1" stroke="none"/>
</svg></div>
<div id="sb"><svg width="20" height="16" style="position:absolute;left:478px;top:7px" fill="none" stroke="#fff" stroke-width="1.3"><path d="M2,15 L9,8 M3,10 L3,15 L8,15"/><path d="M17,2 L11,8 M16,8 L11,8 L11,3"/></svg><div style="position:absolute;left:499px;top:6px;color:#fff;font-size:13px;font-weight:bold;white-space:nowrap;line-height:16px;transform:scaleX(0.925);transform-origin:0 0">按鼠标左键指定第一个角点，或拾取构件图元</div></div>
</body></html>
